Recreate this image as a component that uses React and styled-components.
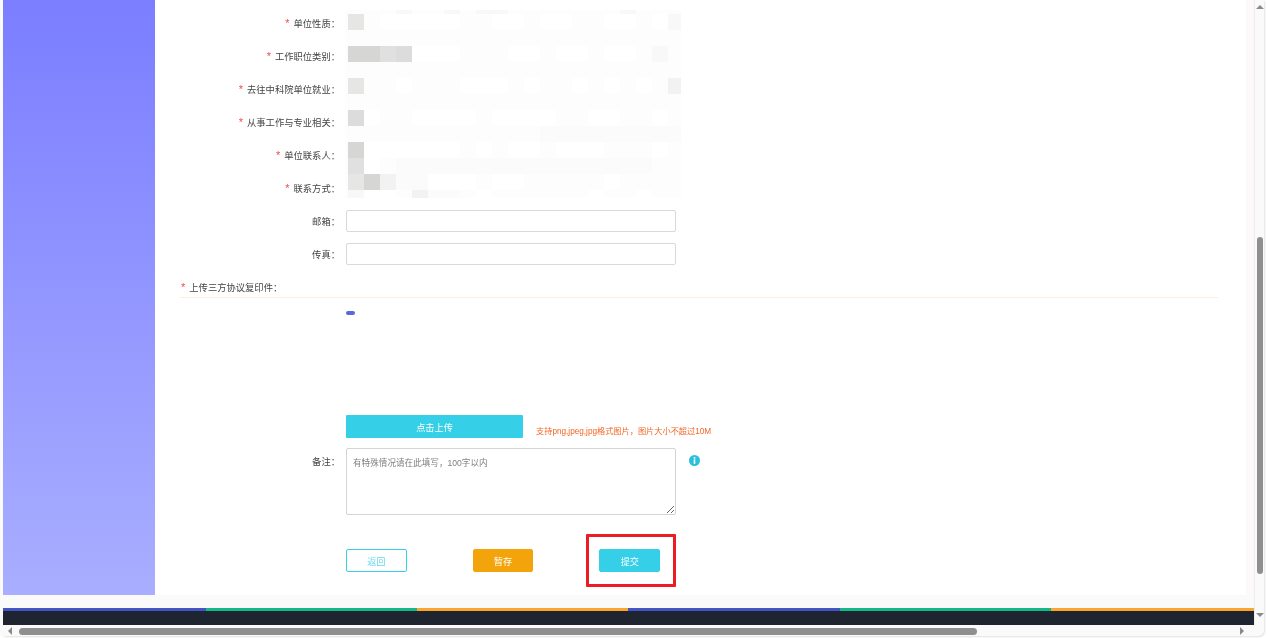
import React from 'react';
import styled, { createGlobalStyle } from 'styled-components';

const GlobalStyle = createGlobalStyle`
  html, body {
    margin: 0;
    height: 100%;
    overflow: hidden;
    background: #fff;
    font-family: "Liberation Sans", "Noto Sans CJK SC", sans-serif;
  }
`;

const Frame = styled.div`
  width: 1264px;
  height: 636px;
  padding-left: 3px;
  box-sizing: border-box;
  display: flex;
  background: #fbfafa;
  border-radius: 0 0 6px 6px;
  box-shadow: 1px 1px 2px rgba(0, 0, 0, 0.12);
  filter: blur(0.4px);
`;

const Window = styled.div`
  width: 1251px;
  display: flex;
  flex-direction: column;
`;

const Main = styled.div`
  height: 596px;
  display: flex;
`;

const Sidebar = styled.div`
  width: 152px;
  background: linear-gradient(180deg, #7b7eff, #a9aeff);
`;

const Content = styled.div`
  width: 1091px;
  background: #fff;
  display: flex;
  flex-direction: column;
  overflow: hidden;
`;

const FormTop = styled.div`
  display: grid;
  grid-template-columns: 185px 336px;
  column-gap: 6px;
  padding-top: 6px;
`;

const LabelStack = styled.div`
  display: flex;
  flex-direction: column;
`;

const Label = styled.div`
  height: 33px;
  display: flex;
  align-items: center;
  justify-content: flex-end;
  font-size: 9.3px;
  color: #444;
  white-space: nowrap;
`;

const Star = styled.span`
  color: #f5484d;
  font-size: 11px;
  margin-right: 4px;
`;

const Mosaic = styled.div`
  width: 336px;
  height: 188px;
  margin: 4px 0 0 -1px;
  padding-left: 3px;
  box-sizing: border-box;
  background: #fdfdfd;
  display: grid;
  grid-template-columns: repeat(20, 16px) 13px;
  grid-template-rows: 4px repeat(11, 16px) 8px;
`;

const Cell = styled.div`
  background: ${(p) => p.$color};
`;

const FieldRow = styled.div`
  height: 33px;
  display: grid;
  grid-template-columns: 185px 330px;
  column-gap: 6px;
  align-items: center;
`;

const TextInput = styled.input`
  width: 100%;
  height: 22px;
  box-sizing: border-box;
  border: 1px solid #d9d9d9;
  border-radius: 2px;
  background: #fff;
  outline: none;
`;

const SectionTitle = styled.div`
  margin: 6px 28px 0 25px;
  height: 21px;
  border-bottom: 1px solid #fdf0da;
  display: flex;
  align-items: center;
  padding-left: 1px;
  font-size: 9.3px;
  color: #444;
`;

const UploadArea = styled.div`
  padding: 13px 0 0 191px;
`;

const Chip = styled.div`
  width: 9px;
  height: 4px;
  border-radius: 2px;
  background: #5a68dc;
`;

const UploadRow = styled.div`
  margin-top: 100px;
  display: flex;
  align-items: flex-end;
  gap: 13px;
`;

const UploadButton = styled.button`
  width: 177px;
  height: 23px;
  border: 0;
  border-radius: 1px;
  background: #35cfe8;
  color: #fff;
  font: inherit;
  font-size: 9.2px;
  padding: 0;
`;

const Hint = styled.span`
  font-size: 8.2px;
  color: #f26522;
  line-height: 11px;
  margin-bottom: 1px;
`;

const RemarkRow = styled.div`
  margin-top: 10px;
  display: grid;
  grid-template-columns: 185px 330px auto;
  column-gap: 6px;
  align-items: start;
`;

const RemarkLabel = styled(Label)`
  height: 26px;
`;

const RemarkInput = styled.textarea`
  width: 100%;
  height: 67px;
  box-sizing: border-box;
  display: block;
  margin: 0;
  padding: 7px 6px;
  border: 1px solid #d4d4d4;
  border-radius: 2px;
  font: inherit;
  font-size: 8.6px;
  outline: none;

  &::placeholder {
    color: #808080;
    opacity: 1;
  }
`;

const InfoIcon = styled.svg`
  width: 11px;
  height: 11px;
  margin: 7px 0 0 7px;
`;

const ActionRow = styled.div`
  margin: 19px 0 0 191px;
  width: 330px;
  height: 53px;
  display: flex;
  align-items: center;
`;

const ActionButton = styled.button`
  width: 61px;
  height: 23px;
  margin-right: ${(p) => p.$gap}px;
  box-sizing: border-box;
  border-radius: 2px;
  padding: 0;
  font: inherit;
  font-size: 9.2px;
  border: 1px solid ${(p) => p.$border};
  background: ${(p) => p.$bg};
  color: ${(p) => p.$color};
`;

const Highlight = styled.div`
  width: 90px;
  height: 53px;
  box-sizing: border-box;
  border: 3px solid #ec1c24;
  border-radius: 1px;
  margin-left: -13px;
  padding-left: 10px;
  display: flex;
  align-items: center;
`;

const Gutter = styled.div`
  width: 8px;
  background: #fbf9fa;
`;

const Footer = styled.div`
  margin-top: 13px;
  height: 17px;
  background: #1f2530;
`;

const Stripes = styled.div`
  height: 3px;
  display: flex;
`;

const Stripe = styled.div`
  width: ${(p) => p.$width}px;
  background: ${(p) => p.$color};
`;

const HScroll = styled.div`
  margin-top: 1px;
  height: 10px;
  display: flex;
  align-items: center;
  background: #fafafa;
`;

const HThumb = styled.div`
  width: 958px;
  height: 7px;
  margin-left: 7px;
  border-radius: 4px;
  background: #8f8f8f;
`;

const VScroll = styled.div`
  width: 10px;
  height: 626px;
  display: flex;
  flex-direction: column;
  align-items: center;
  background: #fafafa;
  border-left: 1px solid #eee;
`;

const VThumb = styled.div`
  width: 6px;
  height: 337px;
  margin-top: 228px;
  border-radius: 3px;
  background: #8f8f8f;
`;

const Arrow = styled.div`
  width: 0;
  height: 0;
  border: 4px solid transparent;
  ${(p) => p.$dir === 'up' && 'border-bottom-color: #8a8a8a; border-top-width: 0; margin-top: 5px;'}
  ${(p) => p.$dir === 'down' && 'border-top-color: #8a8a8a; border-bottom-width: 0; margin-top: 39px;'}
  ${(p) => p.$dir === 'left' && 'border-right-color: #8a8a8a; border-left-width: 0; margin-left: 5px;'}
  ${(p) => p.$dir === 'right' && 'border-left-color: #8a8a8a; border-right-width: 0; margin-left: 263px;'}
`;

const topLabels = ['单位性质：', '工作职位类别：', '去往中科院单位就业：', '从事工作与专业相关：', '单位联系人：', '联系方式：'];

const shades = {
  '.': '#fdfdfd',
  w: '#ffffff',
  a: '#d6d6d5',
  b: '#dcdcdc',
  c: '#e0e0e0',
  d: '#e6e6e4',
  e: '#f2f2f2',
  f: '#f8f8f8',
  g: '#fbfbfb',
};

// blurred-out field values, one letter per tile
const mosaicRows = [
  '...f..f.ff.......f...',
  'd.wwwww..ww.ww..ww.wf',
  '.....................',
  'aacbwww...ww.ww.ww.f.',
  '.....................',
  'd..w...www.w..w.w.w.e',
  '.....................',
  'bw..wwww.wwww..ww..w.',
  '............ggggggggg',
  'awwwwww.w.ww.www...w.',
  'cw.gggggggggggggggg..',
  'daeggwww.ww.....w....',
  'fww.egg.w......w..w..',
];

const stripes = [
  [203, '#4355c6'], [211, '#12b886'], [211, '#fba52c'],
  [212, '#4355c6'], [211, '#12b886'], [203, '#fba52c'],
];

const App = () => {
  return (
    <>
      <GlobalStyle />
      <Frame>
        <Window>
          <Main>
            <Sidebar />
            <Content>
              <FormTop>
                <LabelStack>
                  {topLabels.map((text) => (
                    <Label key={text}><Star>*</Star>{text}</Label>
                  ))}
                </LabelStack>
                <Mosaic>
                  {mosaicRows.flatMap((row, r) =>
                    row.split('').map((c, i) => <Cell key={`${r}-${i}`} $color={shades[c]} />)
                  )}
                </Mosaic>
              </FormTop>
              <FieldRow>
                <Label>邮箱：</Label>
                <TextInput />
              </FieldRow>
              <FieldRow>
                <Label>传真：</Label>
                <TextInput />
              </FieldRow>
              <SectionTitle><Star>*</Star>上传三方协议复印件：</SectionTitle>
              <UploadArea>
                <Chip />
                <UploadRow>
                  <UploadButton>点击上传</UploadButton>
                  <Hint>支持png,jpeg,jpg格式图片，图片大小不超过10M</Hint>
                </UploadRow>
              </UploadArea>
              <RemarkRow>
                <RemarkLabel>备注：</RemarkLabel>
                <RemarkInput placeholder="有特殊情况请在此填写，100字以内" />
                <InfoIcon viewBox="0 0 11 11">
                  <circle cx="5.5" cy="5.5" r="5.5" fill="#2bbfdc" />
                  <rect x="4.7" y="2" width="1.6" height="1.6" fill="#fff" />
                  <rect x="4.7" y="4.3" width="1.6" height="4.6" fill="#fff" />
                </InfoIcon>
              </RemarkRow>
              <ActionRow>
                <ActionButton $gap={66} $border="#35cfe8" $bg="#fff" $color="#5fd8ec">返回</ActionButton>
                <ActionButton $gap={66} $border="#f3a40a" $bg="#f3a40a" $color="#fff">暂存</ActionButton>
                <Highlight>
                  <ActionButton $gap={0} $border="#35cfe8" $bg="#35cfe8" $color="#fff">提交</ActionButton>
                </Highlight>
              </ActionRow>
            </Content>
            <Gutter />
          </Main>
          <Footer>
            <Stripes>
              {stripes.map(([width, color], i) => <Stripe key={i} $width={width} $color={color} />)}
            </Stripes>
          </Footer>
          <HScroll>
            <Arrow $dir="left" />
            <HThumb />
            <Arrow $dir="right" />
          </HScroll>
        </Window>
        <VScroll>
          <Arrow $dir="up" />
          <VThumb />
          <Arrow $dir="down" />
        </VScroll>
      </Frame>
    </>
  );
};

export default App;
